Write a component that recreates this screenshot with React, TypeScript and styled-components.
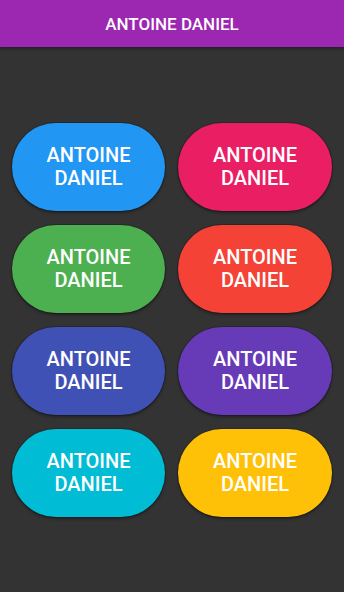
import React from "react";
import styled, { createGlobalStyle } from "styled-components";

const Global = createGlobalStyle`
  html, body { margin: 0; padding: 0; height: 100%; }
  body { background: #333333; font-family: Roboto, "Noto Sans", sans-serif; }
  #root { height: 100%; }
`;

const Page = styled.div`
  display: flex;
  flex-direction: column;
  height: 592px;
  background: #333333;
`;

const Header = styled.header`
  height: 47px;
  flex: 0 0 47px;
  background: #9c27b0;
  display: flex;
  align-items: center;
  justify-content: center;
  color: #fff;
  font-size: 17px;
  font-weight: 500;
  box-shadow: 0 2px 3px rgba(0, 0, 0, 0.35);
  position: relative;
  z-index: 1;
`;

const Content = styled.main`
  flex: 1;
  display: flex;
  align-items: center;
  justify-content: center;
  padding: 0 12px 0 12px;
`;

const Grid = styled.div`
  display: grid;
  grid-template-columns: 153px 154px;
  grid-auto-rows: 88px;
  column-gap: 13px;
  row-gap: 14px;
`;

const Pill = styled.button<{ $bg: string }>`
  border: none;
  border-radius: 44px;
  background: ${(p) => p.$bg};
  color: #fff;
  font-family: Roboto, "Noto Sans", sans-serif;
  font-size: 20px;
  font-weight: 500;
  line-height: 23px;
  text-transform: uppercase;
  padding: 0 16px;
  box-shadow: 0 0 0 1px rgba(0, 0, 0, 0.2), 0 2px 3px rgba(0, 0, 0, 0.35);
  display: flex;
  align-items: center;
  justify-content: center;
  text-align: center;
`;

const colors = [
  "#2196f3",
  "#e91e63",
  "#4caf50",
  "#f44336",
  "#3f51b5",
  "#673ab7",
  "#00bcd4",
  "#ffc107",
];

export default function App() {
  return (
    <>
      <Global />
      <Page>
        <Header>ANTOINE DANIEL</Header>
        <Content>
          <Grid>
            {colors.map((c) => (
              <Pill key={c} $bg={c}>
                Antoine
                <br />
                Daniel
              </Pill>
            ))}
          </Grid>
        </Content>
      </Page>
    </>
  );
}
